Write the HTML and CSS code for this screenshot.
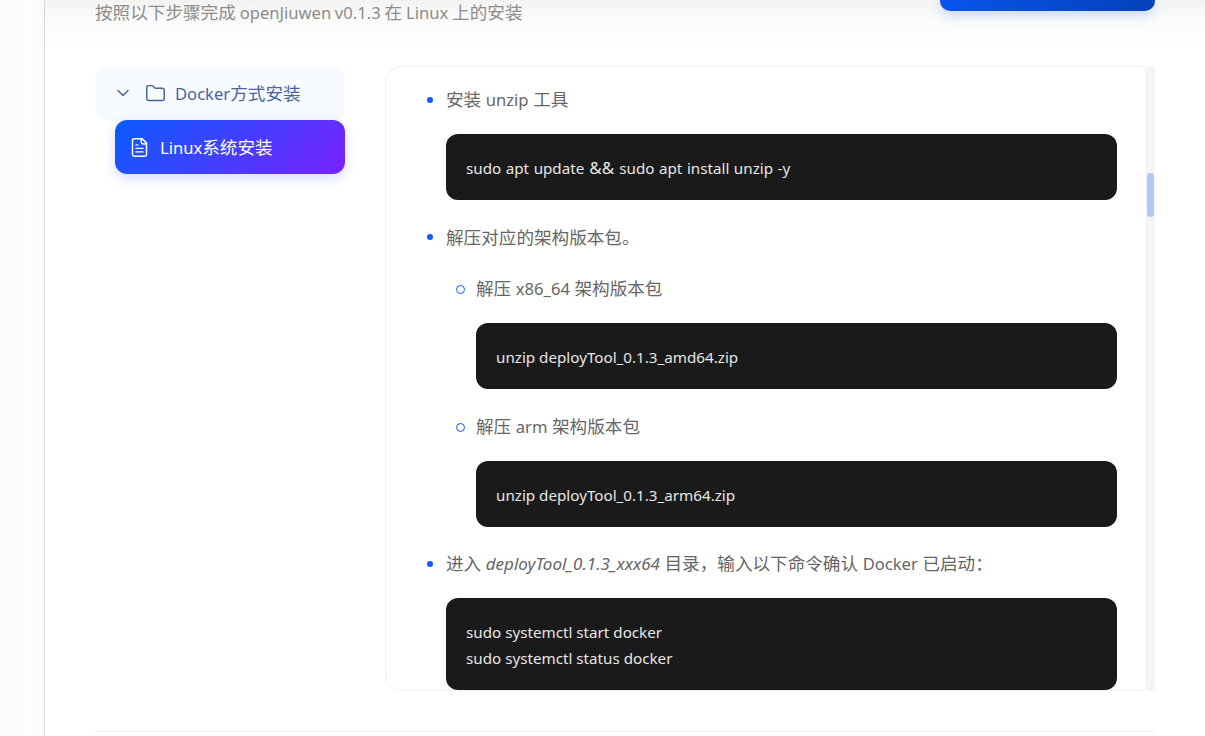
FILE: index.html
```html
<!DOCTYPE html>
<html lang="zh">
<head>
<meta charset="utf-8">
<title>openJiuwen 安装</title>
<link rel="stylesheet" href="styles.css">
</head>
<body>
<div class="app">
  <aside class="rail"></aside>
  <main class="main">
    <header class="header">
      <p class="subtitle">按照以下步骤完成 <span class="lat">openJiuwen v0.1.3</span> 在 <span class="lat">Linux</span> 上的安装</p>
      <div class="cta"></div>
    </header>
    <div class="columns">
      <nav class="tree">
        <div class="tree-head">
          <svg class="chev" width="20" height="20" viewBox="0 0 24 24" fill="none" stroke="currentColor" stroke-width="1.8" stroke-linecap="round" stroke-linejoin="round"><path d="M6 9l6 6 6-6"/></svg>
          <svg class="folder" width="21" height="21" viewBox="0 0 24 24" fill="none" stroke="currentColor" stroke-width="1.7" stroke-linecap="round" stroke-linejoin="round"><path d="M20 20a2 2 0 0 0 2-2V8a2 2 0 0 0-2-2h-7.9a2 2 0 0 1-1.69-.9L9.6 3.9A2 2 0 0 0 7.93 3H4a2 2 0 0 0-2 2v13a2 2 0 0 0 2 2Z"/></svg>
          <span><span class="lat">Docker</span>方式安装</span>
        </div>
        <div class="tree-item">
          <svg width="21" height="21" viewBox="0 0 24 24" fill="none" stroke="currentColor" stroke-width="1.7" stroke-linecap="round" stroke-linejoin="round"><path d="M15 2H6a2 2 0 0 0-2 2v16a2 2 0 0 0 2 2h12a2 2 0 0 0 2-2V7Z"/><path d="M14 2v4a2 2 0 0 0 2 2h4"/><path d="M10 9H8"/><path d="M16 13H8"/><path d="M16 17H8"/></svg>
          <span><span class="lat">Linux</span>系统安装</span>
        </div>
      </nav>
      <section class="panel">
        <div class="doc">
          <ul class="steps">
            <li class="step">
              <p class="line">安装 <span class="lat">unzip</span> 工具</p>
              <pre class="code">sudo apt update <span class="amp">&amp;&amp;</span> sudo apt install unzip -y</pre>
            </li>
            <li class="step">
              <p class="line">解压对应的架构版本包。</p>
              <ul class="substeps">
                <li class="substep">
                  <p class="line">解压 <span class="lat">x86_64</span> 架构版本包</p>
                  <pre class="code">unzip deployTool_0.1.3_amd64.zip</pre>
                </li>
                <li class="substep">
                  <p class="line">解压 <span class="lat">arm</span> 架构版本包</p>
                  <pre class="code">unzip deployTool_0.1.3_arm64.zip</pre>
                </li>
              </ul>
            </li>
            <li class="step">
              <p class="line">进入 <em class="lat-em">deployTool_0.1.3_xxx64</em> 目录，输入以下命令确认 <span class="lat">Docker</span> 已启动：</p>
              <pre class="code">sudo systemctl start docker
sudo systemctl status docker</pre>
            </li>
          </ul>
        </div>
        <div class="scrollbar"><div class="thumb"></div></div>
      </section>
    </div>
    <hr class="rule">
  </main>
</div>
</body>
</html>
```
FILE: styles.css
```css
* { box-sizing: border-box; }
html, body { margin: 0; height: 100%; overflow: hidden; background: #fff; }
body { font-family: "Noto Sans", "Noto Sans CJK SC", sans-serif; }
.app { display: flex; height: 736px; }
.rail { width: 45px; flex: none; background: linear-gradient(90deg, #fbfbfb, #fdfdfd 70%, #fafafa); border-right: 1px solid #d8d8d8; }
.main { flex: 1; min-width: 0; padding: 0 50px; background: linear-gradient(180deg, #f3f3f3 0, #fbfbfb 20px, #fff 50px, #fff 100%); }
.header { height: 66px; display: flex; justify-content: space-between; align-items: flex-start; }
.subtitle { margin: 0; font-size: 17.6px; line-height: 24px; color: #8c8c8c; word-spacing: -0.7px; }
.lat { font-size: 16.6px; }
.lat-em { font-size: 17px; }
.cta { width: 215px; height: 11px; border-radius: 0 0 10px 10px; background: linear-gradient(100deg, #0a55ee, #0540b8); box-shadow: 0 4px 12px rgba(10, 85, 238, .22); }
.columns { display: flex; gap: 40px; height: 625px; }
.tree { width: 250px; flex: none; display: flex; flex-direction: column; }
.tree-head { height: 54px; display: flex; align-items: center; padding-left: 18px; border-radius: 12px; background: #f7faff; color: #4a649c; font-size: 17.6px; line-height: 24px; }
.chev { margin-right: 12px; }
.folder { margin-right: 9px; }
.tree-item { height: 54px; margin-left: 20px; display: flex; align-items: center; gap: 10px; padding-left: 14px; border-radius: 12px; color: #fff; font-size: 17.6px; line-height: 24px; background: linear-gradient(135deg, #0a5cff, #7a22ff); box-shadow: 0 4px 12px rgba(40, 70, 255, .2); }
.panel { flex: 1; min-width: 0; display: flex; }
.doc { flex: 1; min-width: 0; padding: 18.2px 29px 0 40px; border: 1px solid #f0f0f0; border-radius: 16px 6px 6px 16px; overflow: hidden; }
.steps, .substeps { list-style: none; margin: 0; padding: 0; }
.step { position: relative; padding-left: 20px; margin-bottom: 22.6px; }
.step::before { content: ""; position: absolute; left: 1px; top: 11.4px; width: 6px; height: 6px; border-radius: 50%; background: #0a5cff; }
.substeps { margin-top: 22.7px; padding-left: 30px; }
.substep { position: relative; margin-bottom: 23px; }
.substep:last-child { margin-bottom: 0; }
.substep::before { content: ""; position: absolute; left: -20px; top: 11px; width: 7px; height: 7px; border-radius: 50%; border: 1px solid #0a5cff; }
.line { margin: 0; height: 28.8px; font-size: 17.6px; line-height: 28.8px; color: #666; }
.code { margin: 20px 0 0; height: 66px; padding: 21px 20px 0; background: #1a1a1a; color: #e6e6e6; border-radius: 12px; font-family: inherit; font-size: 15.2px; line-height: 26px; white-space: pre; }
.step:first-child .code { word-spacing: 0.6px; }
.step:last-child .code { height: 92px; }
.amp { font-size: 17px; line-height: 20px; padding: 0 0.5px; }
.scrollbar { width: 8px; flex: none; background: #f5f5f5; border-radius: 4px; }
.thumb { margin-top: 107px; width: 7px; height: 44px; border-radius: 4px; background: #afc8f5; }
.rule { margin: 40px 0 0; border: 0; border-top: 1px solid #efefef; }
```
